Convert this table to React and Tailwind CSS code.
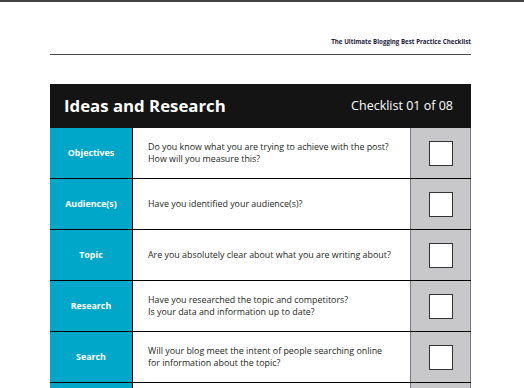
import React from "react";

const rows = [
  {
    label: "Objectives",
    lines: ["Do you know what you are trying to achieve with the post?", "How will you measure this?"],
  },
  { label: "Audience(s)", lines: ["Have you identified your audience(s)?"] },
  { label: "Topic", lines: ["Are you absolutely clear about what you are writing about?"] },
  {
    label: "Research",
    lines: ["Have you researched the topic and competitors?", "Is your data and information up to date?"],
  },
  {
    label: "Search",
    lines: ["Will your blog meet the intent of people searching online", "for information about the topic?"],
  },
  { label: "", lines: [] },
];

function Row({ label, lines }) {
  return (
    <div className="flex h-[51px] border-b border-black">
      <div className="w-[83px] shrink-0 bg-[#00a7c9] border-r border-black flex items-center justify-center text-white font-bold text-[8.9px]">
        {label}
      </div>
      <div className="flex-1 flex flex-col justify-center pl-[15px] text-[8.9px] leading-[12.5px] text-[#231f20]">
        {lines.map((l) => (
          <div key={l}>{l}</div>
        ))}
      </div>
      <div className="w-[61px] shrink-0 bg-[#c8c8ca] border-l border-r border-[#7b7b7b] flex items-center justify-center">
        <div className="w-[24px] h-[25px] bg-white border-[1.5px] border-[#333]" />
      </div>
    </div>
  );
}

export default function App() {
  return (
    <div
      className="w-[524px] h-[388px] overflow-hidden bg-white border-t-2 border-[#424242]"
      style={{ fontFamily: '"Open Sans", sans-serif' }}
    >
      <div className="ml-[50px] w-[421px]">
        <div className="pt-[36px] h-[53px] border-b-[1.5px] border-[#4a4a4a] text-right text-[6.2px] font-bold text-[#1b1b3a] leading-[8px]">
          The Ultimate Blogging Best Practice Checklist
        </div>
        <div className="mt-[29px] h-[44px] bg-[#141414] flex items-center justify-between pl-[14px] pr-[18px] text-white">
          <div className="text-[16.8px] font-bold">Ideas and Research</div>
          <div className="text-[12.5px]">Checklist 01 of 08</div>
        </div>
        {rows.map((r, i) => (
          <Row key={i} {...r} />
        ))}
      </div>
    </div>
  );
}
